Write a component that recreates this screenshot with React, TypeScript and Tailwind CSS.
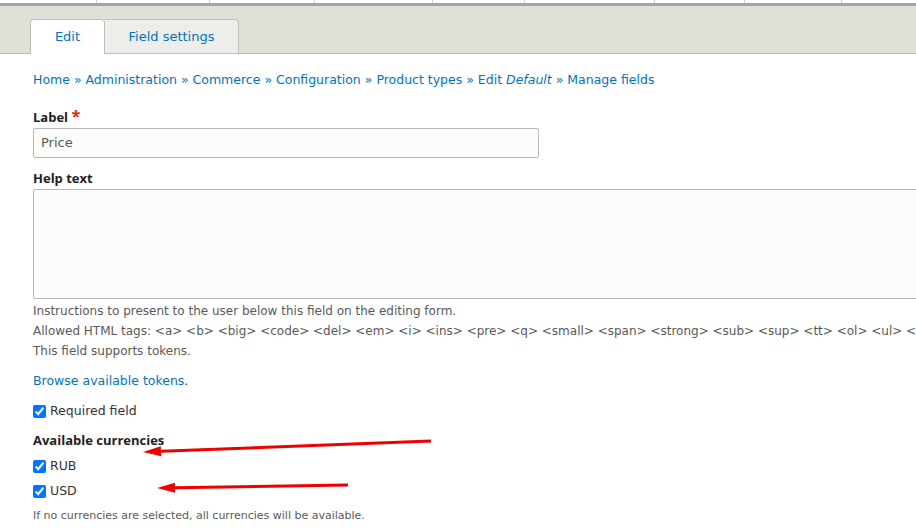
import React from "react";

const font = { fontFamily: '"DejaVu Sans", Verdana, sans-serif' };
const boldFont = { fontFamily: '"Open Sans", "DejaVu Sans", sans-serif' };

const dividers = [97, 113, 105, 118, 92, 130, 90, 97];

function Arrow({ x1, y1, x2, y2 }: { x1: number; y1: number; x2: number; y2: number }) {
	const dx = x2 - x1;
	const dy = y2 - y1;
	const len = Math.hypot(dx, dy);
	const ux = dx / len;
	const uy = dy / len;
	const bx = x2 - ux * 18;
	const by = y2 - uy * 18;
	const px = -uy * 5;
	const py = ux * 5;
	return (
		<svg className="absolute left-0 top-0 pointer-events-none" width={916} height={532}>
			<line x1={x1} y1={y1} x2={bx} y2={by} stroke="#ee0000" strokeWidth={3} />
			<polygon points={`${x2},${y2} ${bx + px},${by + py} ${bx - px},${by - py}`} fill="#ee0000" />
		</svg>
	);
}

export default function App() {
	return (
		<div className="relative w-[916px] h-[532px] overflow-hidden bg-white text-[#333]" style={font}>
			{/* toolbar remnant */}
			<div className="flex h-[3px] bg-white">
				{dividers.map((w, i) => (
					<div key={i} className="h-full border-r border-[#d4d4d4]" style={{ width: w }} />
				))}
			</div>
			<div className="h-[3px] bg-[#a5a5a2]" />
			<div className="h-[48px] bg-[#e0e0d8] border-b border-[#bfbfba] flex items-end pl-[30px]">
				<div className="h-[35px] w-[75px] bg-white border border-b-0 border-[#bfbfba] rounded-t-[4px] flex items-center justify-center text-[13px] text-[#0074bd] -mb-px">
					Edit
				</div>
				<div className="h-[34px] w-[134px] bg-[#ededea] border border-l-0 border-b-0 border-[#bfbfba] rounded-tr-[4px] flex items-center justify-center text-[13px] text-[#0074bd]">
					Field settings
				</div>
			</div>

			<div className="px-[33px]">
				<div className="mt-[17px] text-[12.5px] text-[#0074bd] leading-[18px] whitespace-nowrap">
					Home » Administration » Commerce » Configuration » Product types » Edit <em>Default</em> » Manage fields
				</div>

				<div className="mt-[19px] text-[13px] font-bold text-[#222] leading-[16px]" style={boldFont}>
					Label <span className="text-[#e62600] text-[16px]">*</span>
				</div>
				<div className="mt-[3px] w-[506px] h-[30px] border border-[#b8b8b8] rounded-[2px] bg-[#fcfcfa] flex items-center px-[7px] text-[13px] text-[#595959]">
					Price
				</div>

				<div className="mt-[12px] text-[13px] font-bold text-[#222] leading-[16px]" style={boldFont}>Help text</div>
				<div className="mt-[3px] w-[900px] h-[110px] border border-[#b8b8b8] rounded-[2px] bg-[#fcfcfa]" />

				<div className="mt-[2px] text-[12px] text-[#595959] leading-[20px] whitespace-nowrap">
					<div>Instructions to present to the user below this field on the editing form.</div>
					<div>
						Allowed HTML tags: &lt;a&gt; &lt;b&gt; &lt;big&gt; &lt;code&gt; &lt;del&gt; &lt;em&gt; &lt;i&gt; &lt;ins&gt; &lt;pre&gt; &lt;q&gt; &lt;small&gt; &lt;span&gt; &lt;strong&gt; &lt;sub&gt; &lt;sup&gt; &lt;tt&gt; &lt;ol&gt; &lt;ul&gt; &lt;li&gt;
					</div>
					<div>This field supports tokens.</div>
				</div>

				<div className="mt-[10px] text-[12.5px] leading-[20px]">
					<span className="text-[#0074bd]">Browse available tokens</span>.
				</div>

				<label className="mt-[10px] flex items-center gap-[4px] text-[12.5px] leading-[20px] text-[#333]">
					<input type="checkbox" defaultChecked className="w-[13px] h-[13px] m-0" />
					Required field
				</label>

				<div className="mt-[11px] text-[13px] font-bold text-[#222] leading-[16px]" style={boldFont}>Available currencies</div>
				<label className="mt-[8px] flex items-center gap-[4px] text-[12.5px] leading-[20px]">
					<input type="checkbox" defaultChecked className="w-[13px] h-[13px] m-0" />
					RUB
				</label>
				<label className="mt-[5px] flex items-center gap-[4px] text-[12.5px] leading-[20px]">
					<input type="checkbox" defaultChecked className="w-[13px] h-[13px] m-0" />
					USD
				</label>
				<div className="mt-[5px] text-[11px] text-[#595959] leading-[20px]">
					If no currencies are selected, all currencies will be available.
				</div>
			</div>

			<Arrow x1={431} y1={441} x2={143} y2={452} />
			<Arrow x1={348} y1={485} x2={157} y2={488} />
		</div>
	);
}
